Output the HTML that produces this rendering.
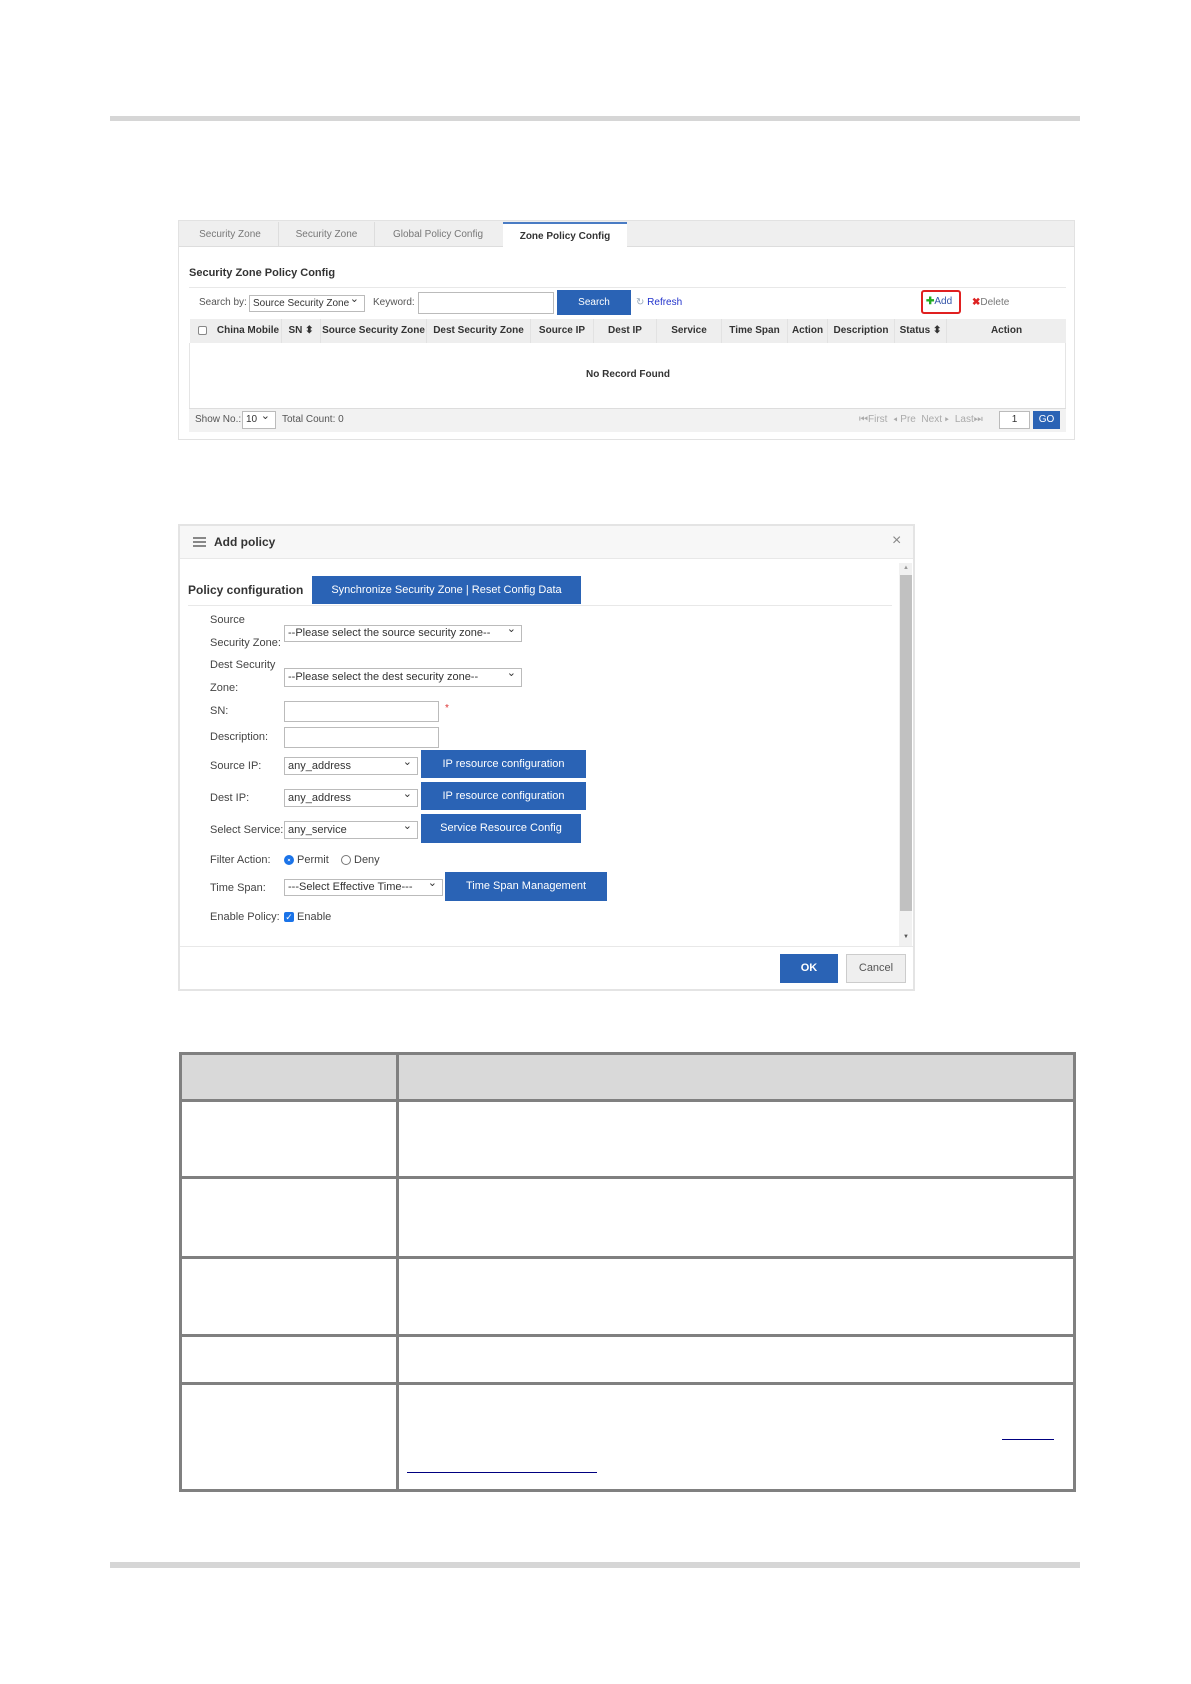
<!DOCTYPE html>
<html><head><meta charset="utf-8"><style>
*{margin:0;padding:0;box-sizing:border-box}
body{width:1191px;height:1684px;background:#fff;position:relative;font-family:"Liberation Sans",sans-serif;color:#333;overflow:hidden}
.a{position:absolute;white-space:nowrap}
.s{font-size:10px}
.b{font-weight:bold}
.btn{position:absolute;background:#2a63b5;color:#fff;font-size:11px;text-align:center}
.sel{position:absolute;border:1px solid #bbb;background:#fff;font-size:11px;padding-left:3px;color:#333}
.sel:after{content:"⌄";position:absolute;right:5px;top:-4px;font-size:11px}
.inp{position:absolute;border:1px solid #bbb;background:#fff}
.th{position:absolute;top:319px;height:24px;line-height:24px;font-size:10px;font-weight:bold;text-align:center;border-right:1px solid #e2e2e2;color:#333}
.lab{position:absolute;left:210px;font-size:11px;color:#444}
</style></head><body>
<div class="a" style="left:110px;top:116px;width:970px;height:5px;background:#d6d6d6"></div>

<!-- top panel -->
<div class="a" style="left:178px;top:220px;width:897px;height:220px;border:1px solid #e2e2e2;background:#fff"></div>
<div class="a" style="left:179px;top:221px;width:895px;height:26px;background:#efefef;border-bottom:1px solid #ddd"></div>
<div class="a s" style="left:182px;top:222px;width:97px;height:25px;line-height:26px;text-align:center;color:#777;border-right:1px solid #ddd">Security Zone</div>
<div class="a s" style="left:279px;top:222px;width:96px;height:25px;line-height:26px;text-align:center;color:#777;border-right:1px solid #ddd">Security Zone</div>
<div class="a s" style="left:375px;top:222px;width:126px;height:25px;line-height:26px;text-align:center;color:#777">Global Policy Config</div>
<div class="a s b" style="left:503px;top:222px;width:124px;height:26px;line-height:25px;text-align:center;background:#fff;border-top:2px solid #4a7cc4;color:#333">Zone Policy Config</div>
<div class="a b" style="left:189px;top:267px;font-size:11px">Security Zone Policy Config</div>
<div class="a" style="left:189px;top:287px;width:877px;height:1px;background:#e8e8e8"></div>
<div class="a s" style="left:199px;top:297px;color:#555">Search by:</div>
<div class="sel" style="left:249px;top:295px;width:116px;height:17px;line-height:15px;font-size:10px">Source Security Zone</div>
<div class="a s" style="left:373px;top:297px;color:#555">Keyword:</div>
<div class="inp" style="left:418px;top:292px;width:136px;height:22px"></div>
<div class="btn" style="left:557px;top:290px;width:74px;height:25px;line-height:25px;font-size:10px">Search</div>
<div class="a s" style="left:636px;top:297px;color:#2233cc"><span style="color:#9ab">↻</span> Refresh</div>
<div class="a" style="left:921px;top:290px;width:40px;height:24px;border:2px solid #e02020;border-radius:3px"></div>
<div class="a s" style="left:926px;top:296px;color:#3355aa"><span style="color:#2a2;font-weight:bold">✚</span>Add</div>
<div class="a s" style="left:972px;top:297px;color:#777"><span style="color:#d22;font-weight:bold">✖</span>Delete</div>
<div class="a" style="left:190px;top:319px;width:876px;height:24px;background:#eeeeee"></div>
<div class="a" style="left:198px;top:326px;width:9px;height:9px;border:1px solid #888;border-radius:2px;background:#fff"></div>
<div class="th" style="left:215px;width:67px">China Mobile</div>
<div class="th" style="left:282px;width:39px">SN ⬍</div>
<div class="th" style="left:321px;width:106px">Source Security Zone</div>
<div class="th" style="left:427px;width:104px">Dest Security Zone</div>
<div class="th" style="left:531px;width:63px">Source IP</div>
<div class="th" style="left:594px;width:63px">Dest IP</div>
<div class="th" style="left:657px;width:65px">Service</div>
<div class="th" style="left:722px;width:66px">Time Span</div>
<div class="th" style="left:788px;width:40px">Action</div>
<div class="th" style="left:828px;width:67px">Description</div>
<div class="th" style="left:895px;width:52px">Status ⬍</div>
<div class="th" style="left:947px;width:119px;border:none">Action</div>
<div class="a" style="left:189px;top:343px;width:1px;height:65px;background:#e5e5e5"></div>
<div class="a" style="left:1065px;top:343px;width:1px;height:65px;background:#e5e5e5"></div>
<div class="a s b" style="left:560px;top:369px;width:136px;text-align:center">No Record Found</div>
<div class="a" style="left:189px;top:408px;width:877px;height:24px;background:#f2f2f2;border-top:1px solid #ddd"></div>
<div class="a s" style="left:195px;top:414px;color:#555">Show No.:</div>
<div class="sel" style="left:242px;top:411px;width:34px;height:18px;line-height:16px;font-size:10px">10</div>
<div class="a s" style="left:282px;top:414px;color:#555">Total Count: 0</div>
<div class="a s" style="left:859px;top:414px;color:#aaa">⏮First &nbsp;◂ Pre &nbsp;Next ▸ &nbsp;Last⏭</div>
<div class="inp" style="left:999px;top:411px;width:31px;height:18px;font-size:10px;text-align:center;line-height:16px">1</div>
<div class="btn" style="left:1033px;top:411px;width:27px;height:18px;line-height:18px;font-size:10px">GO</div>

<!-- dialog -->
<div class="a" style="left:178px;top:524px;width:737px;height:467px;border:2px solid #e4e4e4;background:#fff"></div>
<div class="a" style="left:180px;top:526px;width:733px;height:33px;background:#f7f7f7;border-bottom:1px solid #e8e8e8"></div>
<div class="a" style="left:193px;top:537px;width:13px;height:2px;background:#888;box-shadow:0 4px 0 #888,0 8px 0 #888"></div>
<div class="a b" style="left:214px;top:535px;font-size:12px">Add policy</div>
<div class="a" style="left:892px;top:532px;font-size:16px;color:#888">×</div>
<div class="a b" style="left:188px;top:583px;font-size:12px">Policy configuration</div>
<div class="btn" style="left:312px;top:576px;width:269px;height:28px;line-height:28px">Synchronize Security Zone | Reset Config Data</div>
<div class="a" style="left:188px;top:605px;width:704px;height:1px;background:#e8e8e8"></div>
<div class="lab" style="top:614px">Source</div>
<div class="lab" style="top:637px">Security Zone:</div>
<div class="sel" style="left:284px;top:625px;width:238px;height:17px;line-height:15px">--Please select the source security zone--</div>
<div class="lab" style="top:659px">Dest Security</div>
<div class="lab" style="top:682px">Zone:</div>
<div class="sel" style="left:284px;top:668px;width:238px;height:19px;line-height:17px">--Please select the dest security zone--</div>
<div class="lab" style="top:705px">SN:</div>
<div class="inp" style="left:284px;top:701px;width:155px;height:21px"></div>
<div class="a" style="left:445px;top:703px;color:#d33;font-size:10px">*</div>
<div class="lab" style="top:731px">Description:</div>
<div class="inp" style="left:284px;top:727px;width:155px;height:21px"></div>
<div class="lab" style="top:760px">Source IP:</div>
<div class="sel" style="left:284px;top:757px;width:134px;height:18px;line-height:16px">any_address</div>
<div class="btn" style="left:421px;top:750px;width:165px;height:28px;line-height:28px">IP resource configuration</div>
<div class="lab" style="top:792px">Dest IP:</div>
<div class="sel" style="left:284px;top:789px;width:134px;height:18px;line-height:16px">any_address</div>
<div class="btn" style="left:421px;top:782px;width:165px;height:28px;line-height:28px">IP resource configuration</div>
<div class="lab" style="top:824px">Select Service:</div>
<div class="sel" style="left:284px;top:821px;width:134px;height:18px;line-height:16px">any_service</div>
<div class="btn" style="left:421px;top:814px;width:160px;height:29px;line-height:29px">Service Resource Config</div>
<div class="lab" style="top:854px">Filter Action:</div>
<div class="a" style="left:284px;top:855px;width:10px;height:10px;border-radius:50%;border:3px solid #1a73e8;background:#fff;box-shadow:0 0 0 1px #1a73e8 inset"></div>
<div class="a" style="left:297px;top:854px;font-size:11px;color:#444">Permit</div>
<div class="a" style="left:341px;top:855px;width:10px;height:10px;border-radius:50%;border:1px solid #777"></div>
<div class="a" style="left:354px;top:854px;font-size:11px;color:#444">Deny</div>
<div class="lab" style="top:882px">Time Span:</div>
<div class="sel" style="left:284px;top:879px;width:159px;height:17px;line-height:15px">---Select Effective Time---</div>
<div class="btn" style="left:445px;top:872px;width:162px;height:29px;line-height:29px">Time Span Management</div>
<div class="lab" style="top:911px">Enable Policy:</div>
<div class="a" style="left:284px;top:912px;width:10px;height:10px;background:#1a73e8;border-radius:2px;color:#fff;font-size:9px;line-height:10px;text-align:center">✓</div>
<div class="a" style="left:297px;top:911px;font-size:11px;color:#444">Enable</div>
<div class="a" style="left:899px;top:563px;width:13px;height:383px;background:#f1f1f1"></div>
<div class="a" style="left:900px;top:575px;width:12px;height:336px;background:#c1c1c1"></div>
<div class="a" style="left:903px;top:565px;font-size:6px;color:#999">▲</div>
<div class="a" style="left:903px;top:934px;font-size:6px;color:#555">▼</div>
<div class="a" style="left:180px;top:946px;width:733px;height:1px;background:#e8e8e8"></div>
<div class="btn b" style="left:780px;top:954px;width:58px;height:29px;line-height:29px">OK</div>
<div class="a" style="left:846px;top:954px;width:60px;height:29px;line-height:27px;text-align:center;background:#efefef;border:1px solid #ccc;font-size:11px;color:#555">Cancel</div>

<!-- doc table -->
<div class="a" style="left:179px;top:1052px;width:897px;height:440px;border:3px solid #808080"></div>
<div class="a" style="left:182px;top:1055px;width:891px;height:45px;background:#d9d9d9"></div>
<div class="a" style="left:396px;top:1052px;width:3px;height:440px;background:#808080"></div>
<div class="a" style="left:179px;top:1099px;width:897px;height:3px;background:#808080"></div>
<div class="a" style="left:179px;top:1176px;width:897px;height:3px;background:#808080"></div>
<div class="a" style="left:179px;top:1256px;width:897px;height:3px;background:#808080"></div>
<div class="a" style="left:179px;top:1334px;width:897px;height:3px;background:#808080"></div>
<div class="a" style="left:179px;top:1382px;width:897px;height:3px;background:#808080"></div>
<div class="a" style="left:1002px;top:1439px;width:52px;height:1px;background:#000080"></div>
<div class="a" style="left:407px;top:1472px;width:190px;height:1px;background:#000080"></div>

<div class="a" style="left:110px;top:1562px;width:970px;height:6px;background:#d6d6d6"></div>
</body></html>
